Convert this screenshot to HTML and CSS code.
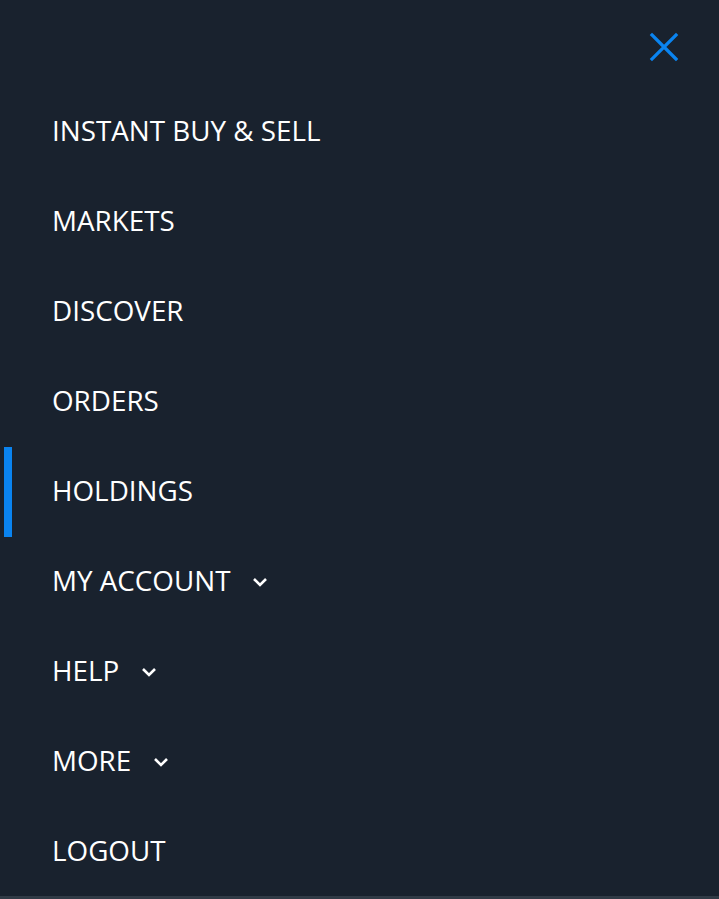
FILE: index.html
```html
<!DOCTYPE html>
<html>
<head>
<meta charset="utf-8">
<link rel="stylesheet" href="styles.css">
</head>
<body>
<nav class="drawer">
  <div class="top">
    <button class="close" aria-label="Close">
      <svg width="30" height="30" viewBox="0 0 30 30"><path d="M3 3 L27 27 M27 3 L3 27" stroke="#0a84f0" stroke-width="3.2" stroke-linecap="square" fill="none"/></svg>
    </button>
  </div>
  <ul class="menu">
    <li class="item"><span>INSTANT BUY &amp; SELL</span></li>
    <li class="item"><span>MARKETS</span></li>
    <li class="item"><span>DISCOVER</span></li>
    <li class="item"><span>ORDERS</span></li>
    <li class="item active"><span>HOLDINGS</span></li>
    <li class="item"><span>MY ACCOUNT</span><svg class="chev" width="16" height="10" viewBox="0 0 16 10"><path d="M2 2 L8 8 L14 2" stroke="#fff" stroke-width="2.6" fill="none"/></svg></li>
    <li class="item"><span>HELP</span><svg class="chev" width="16" height="10" viewBox="0 0 16 10"><path d="M2 2 L8 8 L14 2" stroke="#fff" stroke-width="2.6" fill="none"/></svg></li>
    <li class="item"><span>MORE</span><svg class="chev" width="16" height="10" viewBox="0 0 16 10"><path d="M2 2 L8 8 L14 2" stroke="#fff" stroke-width="2.6" fill="none"/></svg></li>
    <li class="item"><span>LOGOUT</span></li>
  </ul>
</nav>
</body>
</html>
```
FILE: styles.css
```css
html, body {
  margin: 0;
  padding: 0;
  background: #19222e;
}
.drawer {
  width: 719px;
  height: 896px;
  background: #19222e;
  border-bottom: 3px solid #313b46;
  font-family: "Open Sans", sans-serif;
  color: #fff;
  overflow: hidden;
}
.top {
  height: 87px;
  display: flex;
  justify-content: flex-end;
  align-items: flex-start;
}
.close {
  margin: 32px 40px 0 0;
  padding: 0;
  border: 0;
  background: none;
  width: 30px;
  height: 30px;
}
.close svg { display: block; }
.menu {
  list-style: none;
  margin: 0;
  padding: 0;
}
.item {
  height: 90px;
  display: flex;
  align-items: center;
  font-size: 27.8px;
  line-height: 1;
  border-left: 8px solid transparent;
  margin-left: 4px;
  padding-left: 40px;
}
.item span {
  margin-top: -2px;
}
.item.active {
  border-left-color: #0a84f0;
}
.chev {
  margin-left: 22px;
  margin-top: 0;
}
```
